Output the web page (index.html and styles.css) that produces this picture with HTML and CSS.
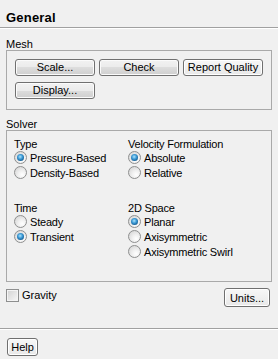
FILE: index.html
```html
<!DOCTYPE html>
<html lang="en">
<head>
    <meta charset="UTF-8">
    <meta name="viewport" content="width=device-width, initial-scale=1.0">
    <title>General</title>
    <link rel="stylesheet" href="styles.css">
</head>
<body>
    <!-- Title -->
    <h1 class="title">General</h1>

    <!-- Mesh -->
    <div class="group-label">Mesh</div>
    <div class="group-box mesh-buttons">
        <button class="btn">Scale...</button>
        <button class="btn">Check</button>
        <button class="btn btn-light">Report Quality</button>
        <button class="btn">Display...</button>
    </div>

    <!-- Solver -->
    <div class="group-label">Solver</div>
    <div class="group-box solver">
        <div class="option-group">
            <div class="option-title">Type</div>
            <label class="option"><span class="radio checked"></span>Pressure-Based</label>
            <label class="option"><span class="radio"></span>Density-Based</label>
        </div>
        <div class="option-group">
            <div class="option-title">Velocity Formulation</div>
            <label class="option"><span class="radio checked"></span>Absolute</label>
            <label class="option"><span class="radio"></span>Relative</label>
        </div>
        <div class="option-group">
            <div class="option-title">Time</div>
            <label class="option"><span class="radio"></span>Steady</label>
            <label class="option"><span class="radio checked"></span>Transient</label>
        </div>
        <div class="option-group">
            <div class="option-title">2D Space</div>
            <label class="option"><span class="radio checked"></span>Planar</label>
            <label class="option"><span class="radio"></span>Axisymmetric</label>
            <label class="option"><span class="radio"></span>Axisymmetric Swirl</label>
        </div>
    </div>

    <!-- Gravity / Units -->
    <div class="extra-row">
        <label class="check"><span class="checkbox"></span>Gravity</label>
        <button class="btn btn-light units-btn">Units...</button>
    </div>

    <!-- Footer -->
    <div class="footer">
        <button class="btn btn-light help-btn">Help</button>
    </div>
</body>
</html>
```

FILE: styles.css
```css
/* Global */
* {
    box-sizing: border-box;
    margin: 0;
    padding: 0;
}
body {
    width: 278px;
    height: 359px;
    background-color: #f0f0f0;
    color: #000;
    font-family: "Liberation Sans", Arial, sans-serif;
    font-size: 11px;
    overflow: hidden;
}

/* Title */
.title {
    font-size: 13px;
    font-weight: bold;
    line-height: 14px;
    letter-spacing: 0.2px;
    padding: 11px 0 2px 6px;
    border-bottom: 1px solid #a0a0a0;
    box-shadow: 0 1px 0 #fff;
}

/* Group boxes */
.group-label {
    line-height: 12px;
    padding-left: 6px;
    margin-top: 10px;
}
.group-box {
    margin: 0 6px;
    border: 1px solid #a9a9a9;
}
.group-box + .group-label {
    margin-top: 8px;
}

/* Mesh buttons */
.mesh-buttons {
    display: grid;
    grid-template-columns: repeat(3, 80px);
    column-gap: 4px;
    row-gap: 6px;
    padding: 8px 8px 10px;
}

/* Buttons */
.btn {
    height: 17px;
    font-family: "Liberation Sans", Arial, sans-serif;
    font-size: 11px;
    line-height: 15px;
    color: #000;
    border: 1px solid #707070;
    border-radius: 3px;
    background: linear-gradient(#f2f2f2 0%, #ebebeb 50%, #dddddd 50%, #cfcfcf 100%);
    box-shadow: inset 0 0 0 1px #fbfbfb;
    cursor: pointer;
    white-space: nowrap;
}
.btn-light {
    border-color: #6f6f6f;
    background: linear-gradient(#f7f7f7, #e8e8e8);
    box-shadow: inset 0 0 0 1px #ffffff;
}
.units-btn {
    width: 46px;
    height: 19px;
    padding-top: 2px;
}
.help-btn {
    width: 31px;
    height: 18px;
    padding-top: 1px;
}

/* Solver options */
.solver {
    display: grid;
    grid-template-columns: 114px 1fr;
    row-gap: 22px;
    padding: 7px 7px 22px;
    letter-spacing: -0.2px;
}
.option-title {
    line-height: 12px;
}
.option {
    display: flex;
    align-items: center;
    gap: 3px;
    height: 15px;
    white-space: nowrap;
}
.radio {
    display: flex;
    align-items: center;
    justify-content: center;
    width: 13px;
    height: 13px;
    border-radius: 50%;
    border: 1px solid #8e8f8f;
    background: radial-gradient(circle at 65% 70%, #ffffff 0%, #f1f1f1 35%, #cfcfcf 100%);
    flex-shrink: 0;
}
.radio.checked::after {
    content: "";
    width: 7px;
    height: 7px;
    border-radius: 50%;
    background: radial-gradient(circle at 45% 40%, #aee4fb 0%, #3c9ad6 40%, #145d93 75%, #0c3f66 100%);
}

/* Gravity row */
.extra-row {
    display: flex;
    justify-content: space-between;
    align-items: flex-start;
    margin-top: 6px;
    padding: 0 8px 0 6px;
}
.check {
    display: flex;
    align-items: center;
    gap: 3px;
    margin-top: 1px;
    line-height: 13px;
}
.checkbox {
    width: 13px;
    height: 13px;
    border: 1px solid #8e8f8f;
    background: linear-gradient(135deg, #d2d2d2, #f7f7f7);
    box-shadow: inset 0 0 0 1px #f4f4f4;
}

/* Footer */
.footer {
    margin-top: 21px;
    padding: 9px 7px 0;
    border-top: 1px solid #a0a0a0;
    box-shadow: inset 0 1px 0 #fff;
}
```
